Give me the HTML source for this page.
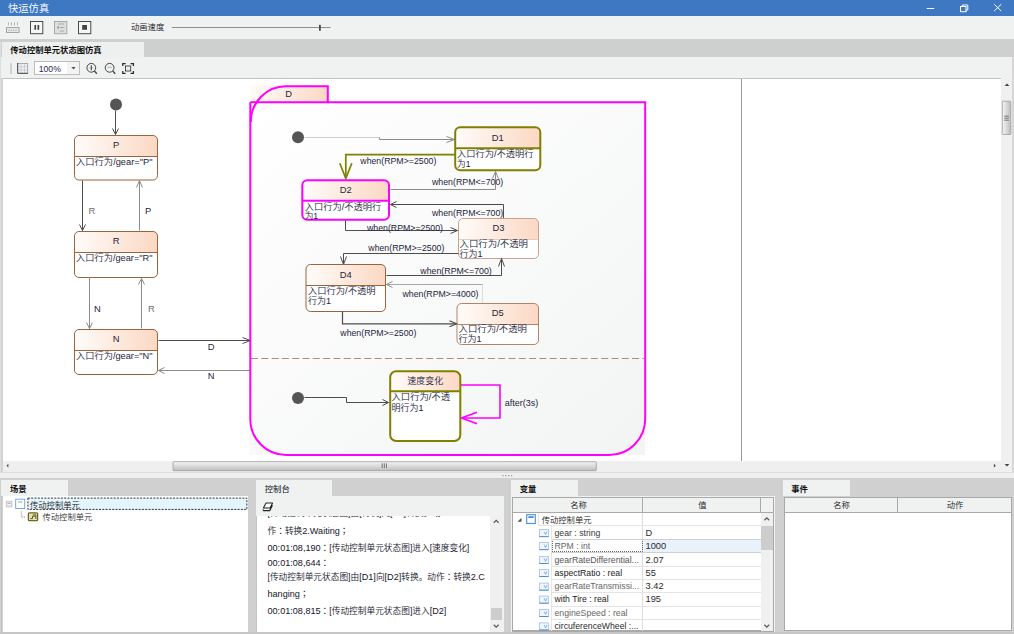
<!DOCTYPE html><html><head><meta charset="utf-8"><title>快运仿真</title><style>
*{box-sizing:border-box;margin:0;padding:0}
html,body{width:1014px;height:634px;overflow:hidden}
body{position:relative;background:#f0f1f1;font-family:"Liberation Sans","Noto Sans CJK SC",sans-serif;font-size:8.3px;color:#1a1a1a;font-weight:350}
.abs,.abs-all div,.abs-all span{position:absolute}
#root div,#root span.p{position:absolute}
#title{left:0;top:0;width:1014px;height:16px;background:#3e78c2}
#title .t{left:8px;top:1px;height:16px;line-height:15.5px;font-size:10.3px;color:#fff;white-space:nowrap}
#strip1{left:0;top:38.8px;width:1014px;height:17.9px;background:#cfcfcf}
#tab1{left:1.5px;top:41.9px;width:142.5px;height:16px;background:#eeefef}
.tabt{white-space:nowrap;font-weight:bold;color:#111;font-size:8.3px;line-height:12px}
#redge{left:1012px;top:57px;width:2px;height:421px;background:#d6d6d6}
#ledge{left:0;top:42px;width:1.3px;height:436px;background:#dedede}
#ledge2{left:1.3px;top:78px;width:1.4px;height:394px;background:#d2d2d2}
#canvas{left:2.5px;top:78px;width:998.7px;height:383px;background:#fff;border-top:1px solid #c2c2c2}
#cdiv{left:741px;top:79px;width:1px;height:382px;background:#9a9a9a}
#vs{left:1001.2px;top:78px;width:10.8px;height:394px;background:#f0f0f0}
#hs{left:2.5px;top:461px;width:998.7px;height:11px;background:#efefef}
#hsline{left:0;top:472px;width:1014px;height:1px;background:#dedede}
#band{left:0;top:473px;width:1014px;height:5px;background:#eeefef}
#bottom{left:0;top:478px;width:1014px;height:156px;background:#d0d0d0}
.btab{top:480px;height:16px;background:#f0f1f1}
.white{background:#fff}
.hdr{background:#f0f1f1;border:1px solid #a9a9a9;top:497px;height:15.5px}
.hdr span{position:absolute;top:0;line-height:14px;white-space:nowrap;transform:translateX(-50%);color:#222}
.thumb{border:1px solid #9c9c9c;border-radius:2px}
.row{left:551.5px;width:209px;height:1px;background:#e6e6e6}
.vt{white-space:nowrap;font-size:8.7px;line-height:12px;color:#2a2a2a}
.con{white-space:nowrap;font-size:8.7px;line-height:12px;color:#15152a;left:267.5px}
.con b{font-weight:normal;font-size:9.1px}
.con i{font-style:normal;font-family:'Liberation Sans','Noto Sans CJK JP',sans-serif}
svg{position:absolute;left:0;top:0}
svg text{font-weight:350;font-family:"Liberation Sans","Noto Sans CJK SC",sans-serif}
</style></head><body><div id="root">
<div id="title"><span class="p t">快运仿真</span></div>
<div id="strip1"></div><div id="tab1"></div>
<span class="p tabt" style="left:10.3px;top:44.3px">传动控制单元状态图仿真</span>
<span class="p" style="left:131px;top:20.7px;line-height:12px;white-space:nowrap;color:#222">动画速度</span>
<div id="ledge"></div><div id="ledge2"></div><div id="redge"></div>
<div id="canvas"></div><div id="cdiv"></div><div id="vs"></div><div id="hs"></div><div id="hsline"></div><div id="band"></div>
<div id="bottom"></div>
<div style="left:34.3px;top:61.3px;width:45.6px;height:14px;background:#f3f3f3;border:1px solid #bdbdbd"></div>
<div style="left:35.3px;top:62.3px;width:32px;height:12px;background:#fff"></div>
<span class="p" style="left:38.7px;top:62.6px;line-height:12px;font-size:8.7px;color:#2a2a55">100%</span>
<div class="btab" style="left:1.2px;width:67px"></div>
<div class="white" style="left:2.5px;top:496px;width:245.7px;height:135.5px"></div>
<div style="left:1.2px;top:496px;width:1.3px;height:135.5px;background:#c4c4c4"></div>
<span class="p tabt" style="left:10px;top:483px">场景</span>
<div style="left:27.5px;top:497.7px;width:219.7px;height:12px;background:#e5f5fd"></div>
<span class="p" style="left:30px;top:499px;line-height:12px;white-space:nowrap;color:#222">传动控制单元</span>
<span class="p" style="left:42.5px;top:511px;line-height:12px;white-space:nowrap;color:#333">传动控制单元</span>
<div class="btab" style="left:256px;width:76px"></div>
<div style="left:256px;top:496px;width:247.5px;height:20px;background:#f0f1f1"></div>
<div style="left:256px;top:516px;width:1.3px;height:115.5px;background:#c4c4c4"></div>
<div class="white" style="left:257.3px;top:516px;width:232.7px;height:115.5px"></div>
<div style="left:490px;top:516px;width:12.3px;height:115.5px;background:#f0f0f0"></div>
<div style="left:502.3px;top:516px;width:1.3px;height:115.5px;background:#f0f1f1"></div>
<div style="left:490.5px;top:608.4px;width:11.5px;height:11.2px;background:#cdcdcd"></div>
<span class="p tabt" style="left:264.8px;top:483px;font-weight:normal">控制台</span>
<div style="left:257.3px;top:516px;width:232.7px;height:115.5px;overflow:hidden">
<span class="p con" style="left:10.2px;top:-9.5px">[传动控制单元状态图]由[待机]向[D1]转换。动</span>
</div>
<span class="p con" style="top:524.6px">作<i>：</i>转换<b>2.Waiting</b><i>；</i></span>
<span class="p con" style="top:542.1px"><b>00:01:08,190</b><i>：</i>[传动控制单元状态图]进入[速度变化]</span>
<span class="p con" style="top:557.1px"><b>00:01:08,644</b><i>：</i></span>
<span class="p con" style="top:570.5px">[传动控制单元状态图]由<b>[D1]</b>向<b>[D2]</b>转换。动作<i>：</i>转换<b>2.C</b></span>
<span class="p con" style="top:587.6px"><b>hanging</b><i>；</i></span>
<span class="p con" style="top:604.6px"><b>00:01:08,815</b><i>：</i>[传动控制单元状态图]进入<b>[D2]</b></span>
<div class="btab" style="left:511px;width:67px"></div>
<div style="left:511px;top:496px;width:264px;height:135.5px;background:#f0f1f1"></div>
<div class="white" style="left:512px;top:497px;width:261.5px;height:134px;border:1px solid #a9a9a9"></div>
<span class="p tabt" style="left:519.7px;top:483px">变量</span>
<div class="hdr" style="left:512px;width:131px"><span style="left:65.5px">名称</span></div>
<div class="hdr" style="left:642px;width:119px"><span style="left:59.5px">值</span></div>
<div class="hdr" style="left:760px;width:13.5px"></div>
<div style="left:761px;top:512.5px;width:11.5px;height:118px;background:#f0f0f0"></div>
<div style="left:761px;top:525.5px;width:11.5px;height:24.3px;background:#cdcdcd"></div>
<div style="left:642px;top:512.5px;width:1px;height:118px;background:#dcdcdc"></div>
<div style="left:551px;top:525.5px;width:1px;height:105px;background:#e6e6e6"></div>
<div style="left:538px;top:512.5px;width:1px;height:13px;background:#e6e6e6"></div>
<div style="left:643.5px;top:539.5px;width:117px;height:13px;background:#e9f1fb"></div>
<div style="left:551.5px;top:539.3px;width:91px;height:13.2px;border:1px dotted #666"></div>
<div class="row" style="top:525px;left:538.5px;width:222.0px;background:#e4e4e4"></div>
<div class="row" style="top:539px;left:551.5px;width:209.0px;background:#cfcfcf"></div>
<div class="row" style="top:552px;left:551.5px;width:209.0px;background:#cfcfcf"></div>
<div class="row" style="top:566px;left:551.5px;width:209.0px;background:#e4e4e4"></div>
<div class="row" style="top:579px;left:551.5px;width:209.0px;background:#e4e4e4"></div>
<div class="row" style="top:592.4px;left:551.5px;width:209.0px;background:#e4e4e4"></div>
<div class="row" style="top:606px;left:551.5px;width:209.0px;background:#e4e4e4"></div>
<div class="row" style="top:619px;left:551.5px;width:209.0px;background:#e4e4e4"></div>
<span class="p" style="left:541.7px;top:514px;line-height:12px;white-space:nowrap;color:#222">传动控制单元</span>
<span class="p vt" style="left:554.5px;top:526.7px;color:#3a3a3a">gear : string</span>
<span class="p vt" style="left:645.5px;top:526.7px;font-size:9.3px">D</span>
<span class="p vt" style="left:554.5px;top:539.7px;color:#666">RPM : int</span>
<span class="p vt" style="left:645.5px;top:539.7px;font-size:9.3px">1000</span>
<span class="p vt" style="left:554.5px;top:553.7px;color:#555">gearRateDifferential...</span>
<span class="p vt" style="left:645.5px;top:553.7px;font-size:9.3px">2.07</span>
<span class="p vt" style="left:554.5px;top:566.7px;color:#222">aspectRatio : real</span>
<span class="p vt" style="left:645.5px;top:566.7px;font-size:9.3px">55</span>
<span class="p vt" style="left:554.5px;top:580.4px;color:#666">gearRateTransmissi...</span>
<span class="p vt" style="left:645.5px;top:580.4px;font-size:9.3px">3.42</span>
<span class="p vt" style="left:554.5px;top:593.4px;color:#222">with Tire : real</span>
<span class="p vt" style="left:645.5px;top:593.4px;font-size:9.3px">195</span>
<span class="p vt" style="left:554.5px;top:606.7px;color:#666">engineSpeed : real</span>
<span class="p vt" style="left:554.5px;top:620.2px;color:#2a2a2a">circuferenceWheel :...</span>
<div style="left:512px;top:630.5px;width:261.5px;height:1px;background:#a9a9a9"></div>
<div style="left:0;top:631.6px;width:1014px;height:2.4px;background:#c6c6c6"></div>
<div class="btab" style="left:783px;width:67px"></div>
<div class="white" style="left:784px;top:497px;width:227.5px;height:134px;border:1px solid #a9a9a9"></div>
<span class="p tabt" style="left:791.3px;top:483px">事件</span>
<div class="hdr" style="left:784px;width:114px"><span style="left:56.5px">名称</span></div>
<div class="hdr" style="left:897px;width:114.5px"><span style="left:57px">动作</span></div>
<svg width="1014" height="634" viewBox="0 0 1014 634" font-size="9.33" fill="#24243a">
<defs><linearGradient id="hg" x1="0" y1="0" x2="1" y2="0"><stop offset="0" stop-color="#fffcfa"/><stop offset="1" stop-color="#fbd8c3"/></linearGradient><linearGradient id="dg" x1="0" y1="0" x2="1" y2="1"><stop offset="0" stop-color="#ffffff"/><stop offset="1" stop-color="#f3f4f4"/></linearGradient><linearGradient id="tg" x1="0" y1="0" x2="0" y2="1"><stop offset="0" stop-color="#f4f4f4"/><stop offset="0.45" stop-color="#dcdcdc"/><stop offset="1" stop-color="#bcbcbf"/></linearGradient><linearGradient id="tv" x1="0" y1="0" x2="1" y2="0"><stop offset="0" stop-color="#f4f4f4"/><stop offset="0.45" stop-color="#dcdcdc"/><stop offset="1" stop-color="#bcbcbf"/></linearGradient></defs>
<circle cx="116" cy="104.5" r="6" fill="#555"/>
<polyline points="115.5,110.5 115.5,134.5" fill="none" stroke="#4d4d4d" stroke-width="1"/>
<polyline points="112.5,128.5 115.5,134.5 118.5,128.5" fill="none" stroke="#4d4d4d" stroke-width="1"/>
<clipPath id="c3"><rect x="74.5" y="135.5" width="83.0" height="44.5" rx="4.5"/></clipPath>
<rect x="74.5" y="135.5" width="83.0" height="44.5" rx="4.5" fill="#fff"/>
<rect x="74.5" y="135.5" width="83.0" height="21.0" fill="url(#hg)" clip-path="url(#c3)"/>
<line x1="74.5" y1="156.5" x2="157.5" y2="156.5" stroke="#98633f" stroke-width="1"/>
<rect x="74.5" y="135.5" width="83.0" height="44.5" rx="4.5" fill="none" stroke="#98633f" stroke-width="1"/>
<text x="116.0" y="148.4" text-anchor="middle">P</text>
<text x="76" y="165.2" font-size="8.9" textLength="76.5" lengthAdjust="spacingAndGlyphs">入口行为/gear="P"</text>
<clipPath id="c10"><rect x="74.5" y="231.5" width="83.0" height="46.0" rx="4.5"/></clipPath>
<rect x="74.5" y="231.5" width="83.0" height="46.0" rx="4.5" fill="#fff"/>
<rect x="74.5" y="231.5" width="83.0" height="21.0" fill="url(#hg)" clip-path="url(#c10)"/>
<line x1="74.5" y1="252.5" x2="157.5" y2="252.5" stroke="#98633f" stroke-width="1"/>
<rect x="74.5" y="231.5" width="83.0" height="46.0" rx="4.5" fill="none" stroke="#98633f" stroke-width="1"/>
<text x="116.0" y="244.4" text-anchor="middle">R</text>
<text x="76" y="260.8" font-size="8.9" textLength="76.5" lengthAdjust="spacingAndGlyphs">入口行为/gear="R"</text>
<clipPath id="c17"><rect x="74.5" y="329.5" width="83.0" height="45.0" rx="4.5"/></clipPath>
<rect x="74.5" y="329.5" width="83.0" height="45.0" rx="4.5" fill="#fff"/>
<rect x="74.5" y="329.5" width="83.0" height="21.0" fill="url(#hg)" clip-path="url(#c17)"/>
<line x1="74.5" y1="350.5" x2="157.5" y2="350.5" stroke="#98633f" stroke-width="1"/>
<rect x="74.5" y="329.5" width="83.0" height="45.0" rx="4.5" fill="none" stroke="#98633f" stroke-width="1"/>
<text x="116.0" y="342.4" text-anchor="middle">N</text>
<text x="76" y="359.2" font-size="8.9" textLength="76.5" lengthAdjust="spacingAndGlyphs">入口行为/gear="N"</text>
<polyline points="82.5,180.5 82.5,230.5" fill="none" stroke="#4d4d4d" stroke-width="1"/>
<polyline points="79.5,224.5 82.5,230.5 85.5,224.5" fill="none" stroke="#4d4d4d" stroke-width="1"/>
<polyline points="139.5,230.5 139.5,180.5" fill="none" stroke="#8c8c8c" stroke-width="1"/>
<polyline points="136.5,187.5 139.5,180.5 142.5,187.5" fill="none" stroke="#8c8c8c" stroke-width="1"/>
<polyline points="89.5,277.5 89.5,328.5" fill="none" stroke="#8c8c8c" stroke-width="1"/>
<polyline points="86.5,322.5 89.5,328.5 92.5,322.5" fill="none" stroke="#8c8c8c" stroke-width="1"/>
<polyline points="141.5,328.5 141.5,278.5" fill="none" stroke="#8c8c8c" stroke-width="1"/>
<polyline points="138.5,284.5 141.5,278.5 144.5,284.5" fill="none" stroke="#8c8c8c" stroke-width="1"/>
<text x="88.5" y="214.3" text-anchor="start" fill="#70707c">R</text>
<text x="145" y="214.3" text-anchor="start">P</text>
<text x="94" y="312.3" text-anchor="start">N</text>
<text x="148" y="312.3" text-anchor="start" fill="#70707c">R</text>
<polyline points="158.5,340.5 250.5,340.5" fill="none" stroke="#4d4d4d" stroke-width="1"/>
<polyline points="242.5,337.5 250.5,340.5 242.5,343.5" fill="none" stroke="#4d4d4d" stroke-width="1"/>
<polyline points="250.5,370.5 158.5,370.5" fill="none" stroke="#8c8c8c" stroke-width="1"/>
<polyline points="164.5,367.5 158.5,370.5 164.5,373.5" fill="none" stroke="#8c8c8c" stroke-width="1"/>
<text x="211" y="350.0" text-anchor="middle">D</text>
<text x="211" y="379.1" text-anchor="middle">N</text>
<rect x="250" y="85.5" width="77.5" height="16.5" fill="url(#hg)"/>
<rect x="250" y="102" width="395" height="353" fill="url(#dg)"/>
<path d="M250.3,102.2 H645.2 V419 A36,36 0 0 1 609.2,455 H286.3 A36,36 0 0 1 250.3,419 V102.2" fill="none" stroke="#ff00ff" stroke-width="2"/>
<path d="M250.8,122 A35,35.5 0 0 1 286,86.3 H327.8 V102" fill="none" stroke="#ff00ff" stroke-width="2"/>
<text x="288.5" y="96.5" text-anchor="middle">D</text>
<line x1="251" y1="358.5" x2="644" y2="358.5" stroke="#b58a6e" stroke-width="1" stroke-dasharray="7,3.3"/>
<circle cx="298" cy="137.2" r="6" fill="#555"/>
<polyline points="304.5,137.5 379.5,137.5" fill="none" stroke="#cfcfcf" stroke-width="1"/>
<polyline points="379.5,137.5 379.5,139.5 454.5,139.5" fill="none" stroke="#8c8c8c" stroke-width="1"/>
<polyline points="446.5,136.5 454.5,139.5 446.5,142.5" fill="none" stroke="#8c8c8c" stroke-width="1"/>
<clipPath id="c52"><rect x="455.2" y="127.3" width="85.09999999999997" height="43.000000000000014" rx="5"/></clipPath>
<rect x="455.2" y="127.3" width="85.09999999999997" height="43.000000000000014" rx="5" fill="#fff"/>
<rect x="455.2" y="127.3" width="85.09999999999997" height="21.000000000000014" fill="url(#hg)" clip-path="url(#c52)"/>
<line x1="455.2" y1="148.3" x2="540.3" y2="148.3" stroke="#808000" stroke-width="2"/>
<rect x="455.2" y="127.3" width="85.09999999999997" height="43.000000000000014" rx="5" fill="none" stroke="#808000" stroke-width="2"/>
<text x="497.75" y="141.1" text-anchor="middle">D1</text>
<text x="457" y="156.9" font-size="8.9" textLength="76.5" lengthAdjust="spacingAndGlyphs">入口行为/不透明行</text>
<text x="457" y="166.9" font-size="8.9" textLength="13.5" lengthAdjust="spacingAndGlyphs">为1</text>
<polyline points="455,154.7 345.8,154.7 345.8,178" fill="none" stroke="#808000" stroke-width="1.7"/>
<polyline points="339.8,163.3 345.8,178.5 351.8,163.3" fill="none" stroke="#808000" stroke-width="1.7"/>
<text x="360.3" y="164.1" text-anchor="start" textLength="76" lengthAdjust="spacingAndGlyphs">when(RPM&gt;=2500)</text>
<clipPath id="c63"><rect x="302.3" y="180.2" width="86.69999999999999" height="39.60000000000002" rx="5"/></clipPath>
<rect x="302.3" y="180.2" width="86.69999999999999" height="39.60000000000002" rx="5" fill="#fff"/>
<rect x="302.3" y="180.2" width="86.69999999999999" height="20.600000000000023" fill="url(#hg)" clip-path="url(#c63)"/>
<line x1="302.3" y1="200.8" x2="389" y2="200.8" stroke="#ff00ff" stroke-width="2"/>
<rect x="302.3" y="180.2" width="86.69999999999999" height="39.60000000000002" rx="5" fill="none" stroke="#ff00ff" stroke-width="2"/>
<text x="345.65" y="193.4" text-anchor="middle">D2</text>
<text x="304.7" y="209.5" font-size="8.9" textLength="76.5" lengthAdjust="spacingAndGlyphs">入口行为/不透明行</text>
<text x="304.7" y="219.0" font-size="8.9" textLength="13.5" lengthAdjust="spacingAndGlyphs">为1</text>
<polyline points="390.5,189.5 495.5,189.5 495.5,171.5" fill="none" stroke="#8c8c8c" stroke-width="1"/>
<polyline points="492.5,178.5 495.5,171.5 498.5,178.5" fill="none" stroke="#8c8c8c" stroke-width="1"/>
<text x="432" y="185.0" text-anchor="start" textLength="71.3" lengthAdjust="spacingAndGlyphs">when(RPM&lt;=700)</text>
<polyline points="503.5,218.5 503.5,204.5 390.5,204.5" fill="none" stroke="#4d4d4d" stroke-width="1"/>
<polyline points="396.5,201.5 390.5,204.5 396.5,207.5" fill="none" stroke="#4d4d4d" stroke-width="1"/>
<text x="432" y="215.5" text-anchor="start" textLength="71.3" lengthAdjust="spacingAndGlyphs">when(RPM&lt;=700)</text>
<clipPath id="c77"><rect x="458.5" y="218.5" width="80.0" height="40.0" rx="4.5"/></clipPath>
<rect x="458.5" y="218.5" width="80.0" height="40.0" rx="4.5" fill="#fff"/>
<rect x="458.5" y="218.5" width="80.0" height="21.0" fill="url(#hg)" clip-path="url(#c77)"/>
<line x1="458.5" y1="239.5" x2="538.5" y2="239.5" stroke="#e2cdbf" stroke-width="1"/>
<rect x="458.5" y="218.5" width="80.0" height="40.0" rx="4.5" fill="none" stroke="#c9a48c" stroke-width="1"/>
<text x="498.5" y="231.4" text-anchor="middle">D3</text>
<text x="459.5" y="247.4" font-size="8.9" textLength="68.5" lengthAdjust="spacingAndGlyphs">入口行为/不透明</text>
<text x="459.5" y="256.9" font-size="8.9" textLength="23" lengthAdjust="spacingAndGlyphs">行为1</text>
<polyline points="345.5,220.5 345.5,230.5 457.5,230.5" fill="none" stroke="#4d4d4d" stroke-width="1"/>
<polyline points="450.5,227.5 457.5,230.5 450.5,233.5" fill="none" stroke="#4d4d4d" stroke-width="1"/>
<text x="367" y="230.8" text-anchor="start" textLength="76" lengthAdjust="spacingAndGlyphs">when(RPM&gt;=2500)</text>
<polyline points="458.5,253.5 343.5,253.5 343.5,264.5" fill="none" stroke="#4d4d4d" stroke-width="1"/>
<polyline points="340.5,256.5 343.5,264.5 346.5,256.5" fill="none" stroke="#4d4d4d" stroke-width="1"/>
<text x="368.3" y="251.3" text-anchor="start" textLength="76" lengthAdjust="spacingAndGlyphs">when(RPM&gt;=2500)</text>
<clipPath id="c91"><rect x="306" y="264.5" width="79.5" height="47.0" rx="4.5"/></clipPath>
<rect x="306" y="264.5" width="79.5" height="47.0" rx="4.5" fill="#fff"/>
<rect x="306" y="264.5" width="79.5" height="21.0" fill="url(#hg)" clip-path="url(#c91)"/>
<line x1="306" y1="285.5" x2="385.5" y2="285.5" stroke="#98633f" stroke-width="1"/>
<rect x="306" y="264.5" width="79.5" height="47.0" rx="4.5" fill="none" stroke="#98633f" stroke-width="1"/>
<text x="345.75" y="278.0" text-anchor="middle">D4</text>
<text x="308" y="294.0" font-size="8.9" textLength="67.5" lengthAdjust="spacingAndGlyphs">入口行为/不透明</text>
<text x="308" y="304.0" font-size="8.9" textLength="23" lengthAdjust="spacingAndGlyphs">行为1</text>
<polyline points="386.5,275.5 501.5,275.5 501.5,258.5" fill="none" stroke="#4d4d4d" stroke-width="1"/>
<polyline points="498.5,266.5 501.5,258.5 504.5,266.5" fill="none" stroke="#4d4d4d" stroke-width="1"/>
<text x="420.3" y="273.5" text-anchor="start" textLength="71.5" lengthAdjust="spacingAndGlyphs">when(RPM&lt;=700)</text>
<polyline points="482.5,302.5 482.5,284.5" fill="none" stroke="#dcdcdc" stroke-width="1"/>
<polyline points="482.5,284.5 386.5,284.5" fill="none" stroke="#a8a8a8" stroke-width="1"/>
<polyline points="392.5,281.5 386.5,284.5 392.5,287.5" fill="none" stroke="#8c8c8c" stroke-width="1"/>
<text x="402.5" y="296.8" text-anchor="start" textLength="76" lengthAdjust="spacingAndGlyphs">when(RPM&gt;=4000)</text>
<clipPath id="c106"><rect x="457" y="303.5" width="81.5" height="41.0" rx="4.5"/></clipPath>
<rect x="457" y="303.5" width="81.5" height="41.0" rx="4.5" fill="#fff"/>
<rect x="457" y="303.5" width="81.5" height="21.0" fill="url(#hg)" clip-path="url(#c106)"/>
<line x1="457" y1="324.5" x2="538.5" y2="324.5" stroke="#b48466" stroke-width="1"/>
<rect x="457" y="303.5" width="81.5" height="41.0" rx="4.5" fill="none" stroke="#b48466" stroke-width="1"/>
<text x="497.75" y="316.4" text-anchor="middle">D5</text>
<text x="458.5" y="332.4" font-size="8.9" textLength="68.5" lengthAdjust="spacingAndGlyphs">入口行为/不透明</text>
<text x="458.5" y="342.4" font-size="8.9" textLength="23" lengthAdjust="spacingAndGlyphs">行为1</text>
<polyline points="342.5,311.5 342.5,323.8 456.5,323.8" fill="none" stroke="#4d4d4d" stroke-width="1.2"/>
<polyline points="449.5,320.8 456.5,323.8 449.5,326.8" fill="none" stroke="#4d4d4d" stroke-width="1.2"/>
<text x="340.3" y="336.3" text-anchor="start" textLength="76" lengthAdjust="spacingAndGlyphs">when(RPM&gt;=2500)</text>
<circle cx="298" cy="398" r="6" fill="#555"/>
<polyline points="304.5,397.5 346.5,397.5 346.5,402.5 388.5,402.5" fill="none" stroke="#4d4d4d" stroke-width="1"/>
<polyline points="382.5,399.5 388.5,402.5 382.5,405.5" fill="none" stroke="#4d4d4d" stroke-width="1"/>
<clipPath id="c120"><rect x="390.2" y="371.3" width="70.10000000000002" height="69.69999999999999" rx="6"/></clipPath>
<rect x="390.2" y="371.3" width="70.10000000000002" height="69.69999999999999" rx="6" fill="#fff"/>
<rect x="390.2" y="371.3" width="70.10000000000002" height="20.0" fill="url(#hg)" clip-path="url(#c120)"/>
<line x1="390.2" y1="391.3" x2="460.3" y2="391.3" stroke="#808000" stroke-width="2"/>
<rect x="390.2" y="371.3" width="70.10000000000002" height="69.69999999999999" rx="6" fill="none" stroke="#808000" stroke-width="2"/>
<text x="425.25" y="384.3" text-anchor="middle" textLength="36" lengthAdjust="spacingAndGlyphs">速度变化</text>
<text x="391.5" y="400.2" font-size="8.9" textLength="58.5" lengthAdjust="spacingAndGlyphs">入口行为/不透</text>
<text x="391.5" y="410.7" font-size="8.9" textLength="32" lengthAdjust="spacingAndGlyphs">明行为1</text>
<polyline points="461,385 500,385 500,418 462,418" fill="none" stroke="#ff00ff" stroke-width="1.6"/>
<polyline points="477,412.3 461.5,418 477,423.7" fill="none" stroke="#ff00ff" stroke-width="1.6"/>
<text x="504.7" y="406.3" text-anchor="start" textLength="33.6" lengthAdjust="spacingAndGlyphs">after(3s)</text>
<g stroke="#fff" stroke-width="1" fill="none"><line x1="926.8" y1="8.5" x2="934.2" y2="8.5"/><rect x="960.5" y="6.5" width="5.5" height="5.2"/><path d="M962.3,6.5 V5 H967.8 V10 H966"/><path d="M994.2,4.3 L1001.2,11 M1001.2,4.3 L994.2,11"/></g>
<g stroke="#a6a6a6" fill="none" stroke-width="1"><rect x="6.5" y="27.5" width="12.5" height="5" fill="#e6e6e6"/><path d="M8.5,22.3 V25.5 M11.5,22.3 V25.5 M14.5,22.3 V25.5 M17.5,22.3 V25.5" stroke="#b4b4b4"/><path d="M9,29.5 V31 M11.3,29.5 V31 M13.6,29.5 V31 M16,29.5 V31" stroke="#b4b4b4"/></g>
<rect x="30.5" y="21.5" width="12.3" height="12.2" fill="#f6f6f6" stroke="#4a4a4a"/><rect x="34.4" y="25" width="1.7" height="4.8" fill="#444"/><rect x="37.5" y="25" width="1.7" height="4.8" fill="#444"/>
<rect x="54.5" y="21.5" width="12.3" height="12.2" fill="#dfdfdf" stroke="#a8a8a8"/><path d="M58,24 H64 M60,27.5 H64.5 M57,27.5 l2,-1.6 M57,27.5 l2,1.6 M57,27.5 H59.5 M60,31 H64" stroke="#a0a0a0" fill="none" stroke-width="0.9"/>
<rect x="78.5" y="21.5" width="12.3" height="12.2" fill="#f6f6f6" stroke="#4a4a4a"/><rect x="82.2" y="25" width="4.8" height="4.8" fill="#444"/>
<line x1="171.8" y1="27.5" x2="330.6" y2="27.5" stroke="#8e8e8e"/><rect x="319" y="24.8" width="1.8" height="6" fill="#4a4a4a"/>
<line x1="11" y1="63" x2="11" y2="74" stroke="#bcbcbc" stroke-width="1.2"/>
<g fill="none"><path d="M21,63.5 V73.3 M24.5,63.5 V73.3 M17.5,66.7 H27.8 M17.5,70 H27.8 " stroke="#bcc4cf" stroke-width="0.7"/><path d="M27.6,63.3 V73.3 M17.5,63.5 H28" stroke="#9a9a9a" stroke-width="0.8"/><path d="M17.7,63 V73.3 H28" stroke="#3c3c3c" stroke-width="1"/></g>
<path d="M71.3,67 h4.4 l-2.2,2.6 z" fill="#555"/>
<g fill="none" stroke="#444" stroke-width="1"><circle cx="91.3" cy="67.8" r="4.4" fill="#eef0f3"/><path d="M94.4,70.9 L96.8,73.7" stroke-width="1.4"/><path d="M89,67.8 H93.6" stroke="#c0c4c8"/><path d="M91.3,65.3 V70.3" stroke-width="1.1"/></g>
<g fill="none" stroke="#444" stroke-width="1"><circle cx="109.6" cy="67.8" r="4.4" fill="#eef0f3"/><path d="M112.7,70.9 L115.2,73.7" stroke-width="1.4"/><path d="M107.4,67.3 H111.8" stroke="#b0b4b8"/></g>
<g fill="none" stroke="#2c2c2c" stroke-width="1.3"><path d="M122.8,66 V63.7 H125.6 M130.6,63.7 H133.4 V66 M133.4,71 V73.4 H130.6 M125.6,73.4 H122.8 V71"/><rect x="125.5" y="66" width="5.2" height="5" stroke-width="0.9" stroke="#3a3a3a" fill="#eef0f6"/></g>
<path d="M1004.6,86 l2.4,-2.6 l2.4,2.6 z" fill="#444"/><path d="M1004.6,464 l2.4,2.6 l2.4,-2.6 z" fill="#444"/>
<rect x="1002.3" y="101.2" width="8.5" height="33.3" rx="0.8" fill="url(#tv)" stroke="#9e9e9e" stroke-width="0.8"/><path d="M1004.2,116.9 h4.6 M1004.2,118.9 h4.6 M1004.2,120.9 h4.6" stroke="#f4f4f4" stroke-width="0.7"/><path d="M1004.2,116.2 h4.6 M1004.2,118.2 h4.6 M1004.2,120.2 h4.6" stroke="#3c3c3c" stroke-width="0.7"/>
<path d="M8.4,463.8 l-1.9,1.9 l1.9,1.9 z" fill="#444"/><path d="M993.9,463.8 l1.9,1.9 l-1.9,1.9 z" fill="#444"/>
<rect x="173" y="461.7" width="423.3" height="9" rx="0.8" fill="url(#tg)" stroke="#9e9e9e" stroke-width="0.8"/><path d="M382.9,463.3 v4.7 M385,463.3 v4.7 M387.1,463.3 v4.7" stroke="#f4f4f4" stroke-width="0.7"/><path d="M382.2,463.3 v4.7 M384.3,463.3 v4.7 M386.4,463.3 v4.7" stroke="#3c3c3c" stroke-width="0.7"/>
<g fill="#8a94a4"><rect x="502.3" y="475" width="1.2" height="1.2"/><rect x="505.2" y="475" width="1.2" height="1.2"/><rect x="508.1" y="475" width="1.2" height="1.2"/><rect x="511" y="475" width="1.2" height="1.2"/></g>
<rect x="27.9" y="498.1" width="219" height="11.3" fill="none" stroke="#2a3440" stroke-width="1" stroke-dasharray="2,1.3"/>
<rect x="6.3" y="501.3" width="5.6" height="5.6" fill="#e4e4e4" stroke="#c6c6c6" stroke-width="0.9"/><line x1="7.6" y1="504.3" x2="10.6" y2="504.3" stroke="#fafafa" stroke-width="1"/><line x1="7.6" y1="503.5" x2="10.6" y2="503.5" stroke="#9a9a9a" stroke-width="0.6"/>
<rect x="15.7" y="499.2" width="9" height="9.3" fill="#fdfeff" stroke="#6ea0d8" stroke-width="0.9"/><line x1="18" y1="502" x2="22.4" y2="502" stroke="#6ea0d8" stroke-width="0.9"/>
<path d="M21.3,511.5 V517 H25.5" stroke="#666" stroke-width="0.9" stroke-dasharray="0.9,1.1" fill="none"/>
<rect x="28.4" y="512.9" width="9.2" height="7.8" rx="1" fill="#e6e2b4" stroke="#6a6626" stroke-width="1.3"/><path d="M30.3,518.6 h2.2 v-2.4 h2.9 M32.8,514.9 h3 v4" stroke="#5e5a22" stroke-width="1" fill="none"/>
<path d="M266,503 h6.6 l-2.6,5 h-6.6 z M262.9,509.4 l0.5,1.2 h6.4 l0.3,-1.2 M270,510.3 l2.5,-5" fill="#fff" stroke="#222" stroke-width="1.05" stroke-linejoin="round"/>
<g fill="none" stroke="#585858" stroke-width="1.25"><path d="M493.8,522.8 l2.4,-2.4 l2.4,2.4"/><path d="M493.8,624.8 l2.4,2.4 l2.4,-2.4"/><path d="M764.4,520.2 l2.4,-2.4 l2.4,2.4"/><path d="M764.4,624.8 l2.4,2.4 l2.4,-2.4"/></g>
<path d="M521.5,517.8 v4 h-4 z" fill="#555"/>
<rect x="526.7" y="514.7" width="8.6" height="8.8" fill="#fdfeff" stroke="#4a8edc" stroke-width="1.1"/><rect x="528.3" y="516.2" width="5.4" height="1.8" fill="#4a8edc"/>
<rect x="539.6" y="529.6" width="8.8" height="7" fill="#f2f6fb" stroke="#9fc0e6" stroke-width="0.8"/><line x1="539.4" y1="536.7" x2="548.6" y2="536.7" stroke="#4a8fdc" stroke-width="1"/><path d="M544.2,531.6 l1.4,3 l1.4,-3" stroke="#5a96dc" stroke-width="0.7" fill="none"/>
<rect x="539.6" y="542.6" width="8.8" height="7" fill="#f2f6fb" stroke="#9fc0e6" stroke-width="0.8"/><line x1="539.4" y1="549.7" x2="548.6" y2="549.7" stroke="#4a8fdc" stroke-width="1"/><path d="M544.2,544.6 l1.4,3 l1.4,-3" stroke="#5a96dc" stroke-width="0.7" fill="none"/>
<rect x="539.6" y="556.4" width="8.8" height="7" fill="#f2f6fb" stroke="#9fc0e6" stroke-width="0.8"/><line x1="539.4" y1="563.5" x2="548.6" y2="563.5" stroke="#4a8fdc" stroke-width="1"/><path d="M544.2,558.4 l1.4,3 l1.4,-3" stroke="#5a96dc" stroke-width="0.7" fill="none"/>
<rect x="539.6" y="569.4" width="8.8" height="7" fill="#f2f6fb" stroke="#9fc0e6" stroke-width="0.8"/><line x1="539.4" y1="576.5" x2="548.6" y2="576.5" stroke="#4a8fdc" stroke-width="1"/><path d="M544.2,571.4 l1.4,3 l1.4,-3" stroke="#5a96dc" stroke-width="0.7" fill="none"/>
<rect x="539.6" y="583.1" width="8.8" height="7" fill="#f2f6fb" stroke="#9fc0e6" stroke-width="0.8"/><line x1="539.4" y1="590.2" x2="548.6" y2="590.2" stroke="#4a8fdc" stroke-width="1"/><path d="M544.2,585.1 l1.4,3 l1.4,-3" stroke="#5a96dc" stroke-width="0.7" fill="none"/>
<rect x="539.6" y="596.1" width="8.8" height="7" fill="#f2f6fb" stroke="#9fc0e6" stroke-width="0.8"/><line x1="539.4" y1="603.2" x2="548.6" y2="603.2" stroke="#4a8fdc" stroke-width="1"/><path d="M544.2,598.1 l1.4,3 l1.4,-3" stroke="#5a96dc" stroke-width="0.7" fill="none"/>
<rect x="539.6" y="609.4" width="8.8" height="7" fill="#f2f6fb" stroke="#9fc0e6" stroke-width="0.8"/><line x1="539.4" y1="616.5" x2="548.6" y2="616.5" stroke="#4a8fdc" stroke-width="1"/><path d="M544.2,611.4 l1.4,3 l1.4,-3" stroke="#5a96dc" stroke-width="0.7" fill="none"/>
<rect x="539.6" y="622.9" width="8.8" height="7" fill="#f2f6fb" stroke="#9fc0e6" stroke-width="0.8"/><line x1="539.4" y1="630.0" x2="548.6" y2="630.0" stroke="#4a8fdc" stroke-width="1"/><path d="M544.2,624.9 l1.4,3 l1.4,-3" stroke="#5a96dc" stroke-width="0.7" fill="none"/>
</svg>
</div></body></html>
